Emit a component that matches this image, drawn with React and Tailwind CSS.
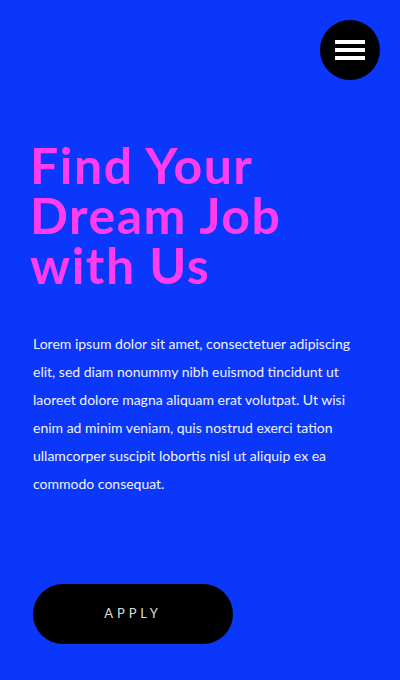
export default function App() {
  return (
    <div className="relative h-[680px] w-[400px] overflow-hidden bg-[#0a37fa] font-['Lato','Liberation_Sans',sans-serif]">
      <header className="flex justify-end px-5 pt-5">
        <button className="flex h-[60px] w-[60px] flex-col items-center justify-center gap-1 rounded-full bg-black">
          <span className="block h-1 w-[30px] bg-white" />
          <span className="block h-1 w-[30px] bg-white" />
          <span className="block h-1 w-[30px] bg-white" />
        </button>
      </header>

      <main className="px-[30px] pt-[60px]">
        <h1 className="text-[50px] font-bold leading-[50px] tracking-[1.5px] text-[#ff3cf0]">
          Find Your
          <br />
          Dream Job
          <br />
          with Us
        </h1>

        <p className="mt-[40px] pl-[3px] pr-[8px] text-[14px] leading-[28px] text-[#f2f2ff]">
          Lorem ipsum dolor sit amet, consectetuer adipiscing elit, sed diam nonummy nibh euismod tincidunt ut
          laoreet dolore magna aliquam erat volutpat. Ut wisi enim ad minim veniam, quis nostrud exerci tation
          ullamcorper suscipit lobortis nisl ut aliquip ex ea commodo consequat.
        </p>

        <button className="ml-[3px] mt-[86px] flex h-[60px] w-[200px] items-center justify-center rounded-full bg-black text-[13px] tracking-[0.3em] text-[#dcdcdc]">
          APPLY
        </button>
      </main>
    </div>
  );
}
